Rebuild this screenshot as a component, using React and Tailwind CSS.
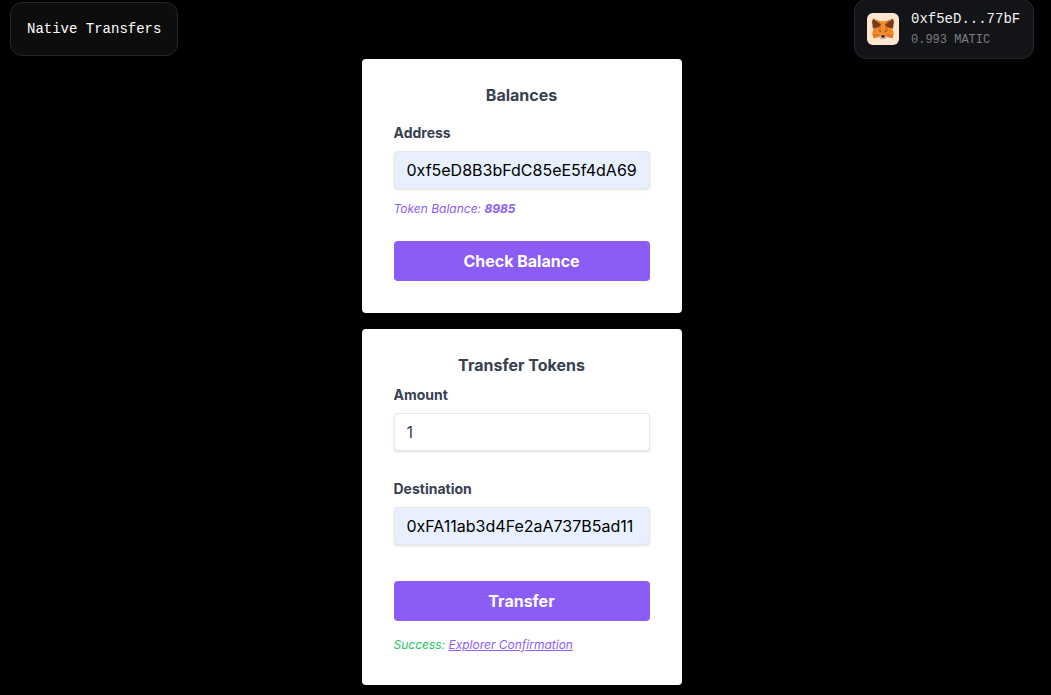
import { useState } from "react";

const FOX_FACETS = [
  ["#e2761b", "274.1,35.5 174.6,109.4 193,65.8"],
  ["#e4761b", "44.4,35.5 143.1,110.1 125.6,65.8"],
  ["#e4761b", "238.3,206.8 211.8,247.4 268.5,263 284.8,207.7"],
  ["#e4761b", "33.9,207.7 50.1,263 106.8,247.4 80.3,206.8"],
  ["#e4761b", "103.6,138.2 87.8,162.1 144.1,164.6 142.1,104.1"],
  ["#e4761b", "214.9,138.2 175.9,103.4 174.6,164.6 230.8,162.1"],
  ["#e4761b", "106.8,247.4 140.6,230.9 111.4,208.1"],
  ["#e4761b", "177.9,230.9 211.8,247.4 207.1,208.1"],
  ["#d7c1b3", "211.8,247.4 177.9,230.9 180.6,253 180.3,262.3"],
  ["#d7c1b3", "106.8,247.4 138.3,262.3 138.1,253 140.6,230.9"],
  ["#233447", "138.8,193.5 110.6,185.2 130.5,176.1"],
  ["#233447", "179.7,193.5 188,176.1 208,185.2"],
  ["#cd6116", "106.8,247.4 111.6,206.8 80.3,207.7"],
  ["#cd6116", "207,206.8 211.8,247.4 238.3,207.7"],
  ["#cd6116", "230.8,162.1 174.6,164.6 179.8,193.5 188.1,176.1 208.1,185.2"],
  ["#cd6116", "110.6,185.2 130.6,176.1 138.8,193.5 144.1,164.6 87.8,162.1"],
  ["#e4751f", "87.8,162.1 111.4,208.1 110.6,185.2"],
  ["#e4751f", "208.1,185.2 207.1,208.1 230.8,162.1"],
  ["#e4751f", "144.1,164.6 138.8,193.5 145.4,227.6 146.9,182.7"],
  ["#e4751f", "174.6,164.6 171.9,182.6 173.1,227.6 179.8,193.5"],
  ["#f6851b", "179.8,193.5 173.1,227.6 177.9,230.9 207.1,208.1 208.1,185.2"],
  ["#f6851b", "110.6,185.2 111.4,208.1 140.6,230.9 145.4,227.6 138.8,193.5"],
  ["#c0ad9e", "180.3,262.3 180.6,253 178.1,250.8 140.4,250.8 138.1,253 138.3,262.3 106.8,247.4 117.8,256.4 140.1,271.9 178.4,271.9 200.8,256.4 211.8,247.4"],
  ["#161616", "177.9,230.9 173.1,227.6 145.4,227.6 140.6,230.9 138.1,253 140.4,250.8 178.1,250.8 180.6,253"],
  ["#763d16", "278.3,114.2 286.8,73.4 274.1,35.5 177.9,106.9 214.9,138.2 267.2,153.5 278.8,140 273.8,136.4 281.8,129.1 275.6,124.3 283.6,118.2"],
  ["#763d16", "31.8,73.4 40.3,114.2 34.9,118.2 42.9,124.3 36.8,129.1 44.8,136.4 39.8,140 51.3,153.5 103.6,138.2 140.6,106.9 44.4,35.5"],
  ["#f6851b", "267.2,153.5 214.9,138.2 230.8,162.1 207.1,208.1 238.3,207.7 284.8,207.7"],
  ["#f6851b", "103.6,138.2 51.3,153.5 33.9,207.7 80.3,207.7 111.4,208.1 87.8,162.1"],
  ["#f6851b", "174.6,164.6 177.9,106.9 193.1,65.8 125.6,65.8 140.6,106.9 144.1,164.6 145.3,182.8 145.4,227.6 173.1,227.6 173.3,182.8"],
];

function FoxIcon() {
  return (
    <svg viewBox="-26 -30 371 371" className="size-8 shrink-0 rounded-md" role="img" aria-label="MetaMask">
      <rect x="-26" y="-30" width="371" height="371" fill="#ffe6ce" />
      {FOX_FACETS.map(([color, points]) => (
        <polygon key={points} points={points} fill={color} stroke={color} strokeLinejoin="round" />
      ))}
    </svg>
  );
}

function Card({ title, children }) {
  return (
    <form
      onSubmit={(e) => e.preventDefault()}
      className="flex w-full max-w-xs flex-col rounded-sm bg-white px-8 pt-6 pb-8"
    >
      <h2 className="text-center text-base font-bold text-[#374151]">{title}</h2>
      {children}
    </form>
  );
}

function Field({ id, label, initial, filled, className }) {
  const [value, setValue] = useState(initial);
  return (
    <div className={"flex flex-col gap-2 " + className}>
      <label htmlFor={id} className="text-sm font-bold text-[#374151]">
        {label}
      </label>
      <input
        id={id}
        type="text"
        value={value}
        onChange={(e) => setValue(e.target.value)}
        className={
          "w-full rounded-sm border border-[#e5e7eb] px-3 py-2 text-base leading-5 shadow-sm outline-none focus:border-[#8b5cf6] " +
          (filled ? "bg-[#e8f0fe] text-black" : "bg-white text-[#374151]")
        }
      />
    </div>
  );
}

function ActionButton({ className, children }) {
  return (
    <button
      type="submit"
      className={"w-full rounded-sm bg-[#8b5cf6] px-4 py-2 text-base font-bold text-white hover:bg-[#7c3aed] " + className}
    >
      {children}
    </button>
  );
}

export default function App() {
  return (
    <div className="min-h-screen bg-black pr-2 font-['Inter',sans-serif]">
      <div className="flow-root">
        <header className="-mt-px flex items-center justify-between pr-[9px] pl-2.5 font-['Liberation_Mono',monospace]">
          <h1 className="rounded-xl border border-[#262626] bg-[#0d0d0d] px-4 py-4 text-sm text-white">
            Native Transfers
          </h1>
          <button
            type="button"
            className="flex h-15 w-45 items-center gap-3 rounded-xl border border-[#24262a] bg-[#131418] px-3 text-left"
          >
            <FoxIcon />
            <span className="flex flex-col pt-0.5">
              <span className="text-sm text-[#f2f2f3]">0xf5eD...77bF</span>
              <span className="text-xs leading-[22px] text-[#7c7d81]">0.993 MATIC</span>
            </span>
          </button>
        </header>

        <main className="flex flex-col items-center gap-4 pb-2.5">
          <Card title="Balances">
            <Field id="address" label="Address" initial="0xf5eD8B3bFdC85eE5f4dA69" filled className="mt-4" />
            <p className="mt-3 text-xs text-[#8b5cf6] italic">
              Token Balance: <strong className="font-bold">8985</strong>
            </p>
            <ActionButton className="mt-6">Check Balance</ActionButton>
          </Card>

          <Card title="Transfer Tokens">
            <Field id="amount" label="Amount" initial="1" className="mt-2" />
            <Field id="destination" label="Destination" initial="0xFA11ab3d4Fe2aA737B5ad11" filled className="mt-7" />
            <ActionButton className="mt-9">Transfer</ActionButton>
            <p className="mt-4 text-xs text-[#22c55e] italic">
              Success:{" "}
              <a href="#confirmation" className="text-[#8b5cf6] underline">
                Explorer Confirmation
              </a>
            </p>
          </Card>
        </main>
      </div>
    </div>
  );
}
